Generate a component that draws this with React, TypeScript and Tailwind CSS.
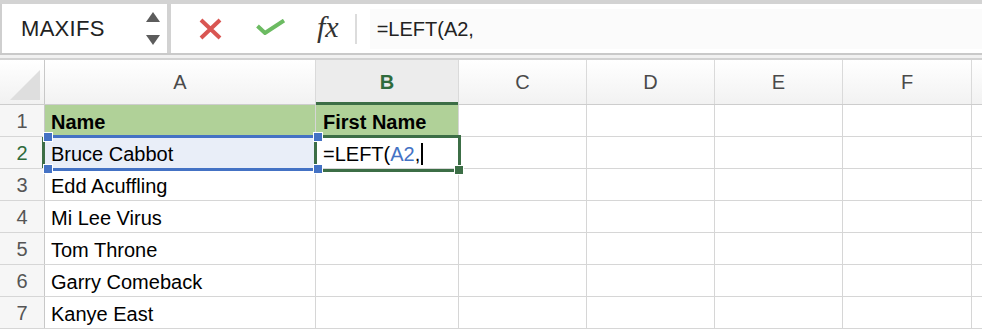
import React from "react";

type Col = { key: string; w: string };

const cols: Col[] = [
  { key: "A", w: "w-[271px]" },
  { key: "B", w: "w-[143px]" },
  { key: "C", w: "w-[128px]" },
  { key: "D", w: "w-[128px]" },
  { key: "E", w: "w-[128px]" },
  { key: "F", w: "w-[129px]" },
];

const names = ["Bruce Cabbot", "Edd Acuffling", "Mi Lee Virus", "Tom Throne", "Garry Comeback", "Kanye East"];

function Handle({ className }: { className: string }) {
  return <div className={`absolute border border-white ${className}`} />;
}

function FormulaBar() {
  return (
    <div className="flex h-[49px] bg-white">
      <div className="w-[167px] border-l-2 border-[#cfcfcf] flex items-center justify-between pl-[19px] pr-[6px]">
        <span className="text-[22px] text-[#222] font-['Liberation_Sans',sans-serif] tracking-[0.3px]">MAXIFS</span>
        <div className="flex flex-col gap-[13px] pr-[1px]">
          <svg width="14" height="10" viewBox="0 0 14 10"><polygon points="7,0 14,10 0,10" fill="#5c5c5c" /></svg>
          <svg width="14" height="10" viewBox="0 0 14 10"><polygon points="0,0 14,0 7,10" fill="#5c5c5c" /></svg>
        </div>
      </div>
      <div className="w-[4px] bg-[#d2d2d2]" />
      <div className="flex-1 flex items-center">
        <div className="w-[24px]" />
        <svg width="23" height="22" viewBox="0 0 23 22" className="ml-[4px]">
          <path d="M2 2 L21 20 M21 2 L2 20" stroke="#d95652" strokeWidth="4" strokeLinecap="butt" />
        </svg>
        <svg width="30" height="16" viewBox="0 0 30 16" className="ml-[34px] mt-[-4px]">
          <path d="M1.5 7 L9 14 L28 1.5" stroke="#6cbb62" strokeWidth="4" fill="none" />
        </svg>
        <span className="ml-[31px] italic text-[30px] leading-none text-[#333] font-['Liberation_Serif',serif] mt-[-4px]">fx</span>
        <div className="ml-[16px] w-[2px] h-[30px] bg-[#dcdcdc]" />
        <div className="ml-[13px] flex-1 h-[40px] bg-[#fbfbfb] flex items-center">
          <span className="text-[20px] text-[#222] font-['Liberation_Sans',sans-serif] pl-[7px]">=LEFT(A2,</span>
        </div>
      </div>
    </div>
  );
}

function HeaderRow() {
  return (
    <div className="flex h-[45px] border-b border-[#cdcdcd]">
      <div className="w-[45px] shrink-0 border-r border-[#c8c8c8] bg-gradient-to-b from-white to-[#f1f1f1] flex items-end justify-end p-[4px]">
        <svg width="30" height="30" viewBox="0 0 30 30"><polygon points="30,0 30,30 0,30" fill="#dedede" /></svg>
      </div>
      {cols.map((c) =>
        c.key === "B" ? (
          <div key={c.key} className={`${c.w} shrink-0 border-r border-[#dadada] bg-[#ececec] flex items-center justify-center relative`}>
            <span className="text-[20px] font-bold text-[#2f6b3c] font-['Liberation_Sans',sans-serif]">B</span>
            <div className="absolute left-0 right-0 bottom-[-1px] h-[3px] bg-[#3c6e46]" />
          </div>
        ) : (
          <div key={c.key} className={`${c.w} shrink-0 border-r border-[#dadada] bg-gradient-to-b from-white to-[#f2f2f2] flex items-center justify-center`}>
            <span className="text-[20px] text-[#4a4a4a] font-['Liberation_Sans',sans-serif]">{c.key}</span>
          </div>
        )
      )}
      <div className="flex-1 bg-gradient-to-b from-white to-[#f2f2f2]" />
    </div>
  );
}

function Row({ n, a, b }: { n: number; a: string; b?: React.ReactNode }) {
  const head = n === 1;
  const active = n === 2;
  return (
    <div className="flex h-[32px] border-b border-[#d6d6d6] font-['Liberation_Sans',sans-serif]">
      <div className={`w-[45px] shrink-0 border-r border-[#c8c8c8] bg-[#f6f6f6] flex items-center justify-center relative text-[20px] ${active ? "text-[#2f6b3c]" : "text-[#555]"}`}>
        {n}
        {active && <div className="absolute right-[-1px] top-0 bottom-0 w-[3px] bg-[#3c6e46]" />}
      </div>
      <div className={`w-[271px] shrink-0 border-r border-[#d6d6d6] flex items-end pl-[6px] pb-[2px] text-[20px] leading-[24px] text-black ${head ? "bg-[#b0d198] font-bold" : active ? "bg-[#e9eef8]" : ""}`}>
        {a}
      </div>
      <div className={`w-[143px] shrink-0 border-r border-[#d6d6d6] flex items-end pl-[7px] pb-[2px] text-[20px] leading-[24px] text-black ${head ? "bg-[#b0d198] font-bold" : ""}`}>
        {b}
      </div>
      {cols.slice(2).map((c) => (
        <div key={c.key} className={`${c.w} shrink-0 border-r border-[#d6d6d6]`} />
      ))}
      <div className="flex-1" />
    </div>
  );
}

export default function App() {
  return (
    <div className="w-[982px] h-[330px] overflow-hidden bg-white relative">
      <div className="h-[4px] bg-[#d3d3d3]" />
      <FormulaBar />
      <div className="h-[2px] bg-[#c9c9c9]" />
      <div className="h-[3px] bg-[#f1f1f1]" />
      <div className="h-[2px] bg-[#d2d2d2]" />
      <HeaderRow />
      <div className="relative">
        <Row n={1} a="Name" b="First Name" />
        <Row
          n={2}
          a="Bruce Cabbot"
          b={
            <span className="flex items-end">
              =LEFT(<span className="text-[#4472c4]">A2</span>,<span className="inline-block w-[2px] h-[22px] bg-black ml-[1px] mb-[1px]" />
            </span>
          }
        />
        {names.slice(1).map((name, i) => (
          <Row key={name} n={i + 3} a={name} />
        ))}

        {/* active cell B2 */}
        <div className="absolute left-[314px] top-[30px] w-[147px] h-[37px] border-[3px] border-[#3c6e46] pointer-events-none">
          <Handle className="right-[-6px] bottom-[-6px] w-[10px] h-[10px] bg-[#3c6e46]" />
        </div>

        {/* reference highlight on A2 */}
        <div className="absolute left-[46px] top-[30px] w-[271px] h-[36px] border-y-[3px] border-[#4472c4] pointer-events-none">
          <Handle className="left-[-3px] top-[-6px] w-[10px] h-[10px] bg-[#4472c4]" />
          <Handle className="left-[-3px] bottom-[-6px] w-[10px] h-[10px] bg-[#4472c4]" />
          <Handle className="right-[-6px] top-[-6px] w-[10px] h-[10px] bg-[#4472c4]" />
          <Handle className="right-[-6px] bottom-[-6px] w-[10px] h-[10px] bg-[#4472c4]" />
        </div>
      </div>
    </div>
  );
}
